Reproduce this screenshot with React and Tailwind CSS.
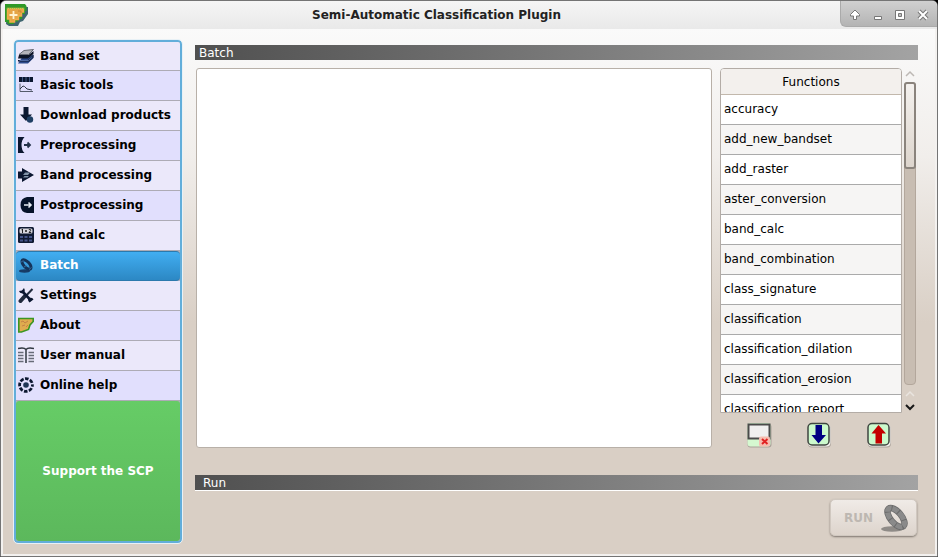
import React from "react";

const ink = "#0b1730";

function StackIcon() {
  return (
    <>
      <path d="M0 15.500h10l5.500-5.500V7L5 8z" fill="#2d4a8c" />
      <path d="M0 12h10l5.500-5.500v3L11 13.500H0z" fill="#0b1730" />
      <path d="M1 7l-1 3.500h10L15.500 6V3l-5 4z" fill="#0d1526" />
      <path d="M1.500 12.500h9l4-3.500" fill="none" stroke="#5f7fc0" strokeWidth=".8" />
      <path d="M1 6.500h9.500l5-5L6 2.500z" fill="#b4b5bb" stroke="#4b5059" strokeWidth=".8" />
    </>
  );
}
function ChartIcon() {
  return (
    <>
      <path d="M1 0h14v5H1z" fill="#0b1730" />
      <path d="M4.500 0v5M8 0v5M11.500 0v5" stroke="#5a75a8" strokeWidth=".7" />
      <path d="M2 6.500v8h13" fill="none" stroke="#555c6c" />
      <path d="M2 12l3-3 1.500.5 2.500 2.500 5 1" fill="none" stroke="#303848" />
    </>
  );
}
function DownloadIcon() {
  return (
    <>
      <path d="M5.500 0h5v7.500h3.500L8 14 2 7.500h3.500z" fill={ink} />
      <circle cx="12" cy="12.500" r="3.200" fill="#1f3f63" />
    </>
  );
}
function PreIcon() {
  return (
    <>
      <path d="M0 0h6.500Q3.500 3 3.500 8t3 8H0z" fill={ink} />
      <path d="M6 8h6M9.500 5.500L12 8l-2.500 2.500" fill="none" stroke="#23324a" strokeWidth="1.800" />
    </>
  );
}
function BandIcon() {
  return (
    <>
      <path d="M0 4.500h4V1l12 7-12 7v-3.500H0z" fill={ink} />
      <path d="M5 8l2-2.500h5L10 8zM5 10.500L6.500 9H11l-1.500 1.500z" fill="#8194a8" />
    </>
  );
}
function PostIcon() {
  return (
    <>
      <path d="M16 0v16H9Q2.500 15 2.500 8T9 0z" fill="#06122a" />
      <path d="M6 8h7M10.500 5.500L13 8l-2.500 2.500" fill="none" stroke="#e8edf5" strokeWidth="1.600" />
    </>
  );
}
function CalcIcon() {
  return (
    <>
      <rect width="16" height="16" rx="1.500" fill="#111b33" />
      <rect x="1.500" y="1.500" width="13" height="5" rx="1.500" fill="#d9d8df" />
      <path d="M4.500 2v4M3.500 2.800h1M7 4h2M8 3v2M10.800 2.600h1.800v1l-1.600 1.900h2.200" fill="none" stroke="#111" strokeWidth=".9" />
      <path d="M2 9h3v2H2zM6.500 9h3v2h-3zM11 9h3v2h-3zM2 12.500h3v2H2zM6.500 12.500h3v2h-3zM11 12.500h3v2h-3z" fill="#46558a" />
    </>
  );
}
function BatchIcon() {
  return (
    <>
      <ellipse cx="6.500" cy="14" rx="5.500" ry="1.700" fill="#173b66" />
      <ellipse cx="8.500" cy="7.500" rx="2.800" ry="6" transform="rotate(-43 8.500 7.500)" fill="none" stroke="#14335a" strokeWidth="3" />
      <path d="M2.500 5.500l3-2M6 10l2.500-1.500M11 12.500l2.500-2" stroke="#3d77ab" strokeWidth=".8" />
    </>
  );
}
function ToolsIcon() {
  return (
    <>
      <path d="M2.500 14.500L14.500 2" stroke="#202a3d" strokeWidth="2" />
      <path d="M2.500 14l4-4.500" stroke="#202a3d" strokeWidth="4" strokeLinecap="round" />
      <path d="M4 4l9 9.500" stroke={ink} strokeWidth="2.600" />
      <path d="M1 4q1 3 4 2t1-5L4 3.500zM15.500 12.500q-1-2.500-4-1.500t0 4.500l2-1.500z" fill={ink} />
    </>
  );
}
function MapIcon() {
  return (
    <>
      <path d="M.8 1.500h14.400v3L12 8l-1.500 4.500-7 2.500H.8z" fill="#dfac4e" stroke="#3b9622" strokeWidth="1.600" />
      <path d="M3 5l2-1 2 2 3-2M4 9l3-1M8 10l2-2" fill="none" stroke="#c58146" />
    </>
  );
}
function BookIcon() {
  return (
    <>
      <path d="M0 1.500q6-1.500 8 1 2-2.500 8-1M8 2.500V16" fill="none" stroke="#303740" strokeWidth="1.500" />
      <path d="M0 5.500h5.500M0 8.500h5.500M0 11.500h5.500M0 14.500h5.500M10.500 5.500H16M10.500 8.500H16M10.500 11.500H16M10.500 14.500H16" stroke="#686c78" strokeWidth="1.300" />
    </>
  );
}
function HelpIcon() {
  return (
    <>
      <circle cx="8" cy="8" r="6.400" fill="none" stroke={ink} strokeWidth="2.800" strokeDasharray="3.600 1.430" strokeDashoffset="1.800" />
      <circle cx="8" cy="8" r="2.800" fill="#1e3555" />
    </>
  );
}

const tabs = [
  ["Band set", StackIcon],
  ["Basic tools", ChartIcon],
  ["Download products", DownloadIcon],
  ["Preprocessing", PreIcon],
  ["Band processing", BandIcon],
  ["Postprocessing", PostIcon],
  ["Band calc", CalcIcon],
  ["Batch", BatchIcon],
  ["Settings", ToolsIcon],
  ["About", MapIcon],
  ["User manual", BookIcon],
  ["Online help", HelpIcon],
];

const functions = [
  "accuracy",
  "add_new_bandset",
  "add_raster",
  "aster_conversion",
  "band_calc",
  "band_combination",
  "class_signature",
  "classification",
  "classification_dilation",
  "classification_erosion",
  "classification_report",
];

function TitleBar() {
  return (
    <header className="flex h-7 shrink-0 items-start bg-linear-to-b from-[#f5f5f5] to-[#e9e9e9]">
      <div className="w-8 shrink-0 pt-[3px] pl-1">
        <svg className="block h-[22px] w-[23px]" viewBox="0 0 23 22" aria-hidden="true">
          <path d="M2 3h21v7l-5 7-3 1-2 4H4l-3-2z" fill="#3f6670" />
          <path d="M0 0h20l1.500 2v5H20v3h-3v5h-4v2.500H9V20H3l-1-2H0z" fill="#2f9a27" />
          <path d="M2.500 4.500h16V8h-2v4h-3v3.500h-4V18H5v-3H2.500z" fill="#e5a546" stroke="#f0ad49" strokeWidth="1.500" />
          <path d="M2 4.500h18" stroke="#8ccf4a" strokeDasharray="1 1" />
          <path d="M8.500 7v8M4.500 11h8" stroke="#fff3cf" strokeWidth="1.800" />
          <path d="M13 7h3v2" fill="none" stroke="#c98330" />
        </svg>
      </div>
      <h1 className="flex-1 text-center text-[12px] leading-7 font-bold text-[#222]">Semi-Automatic Classification Plugin</h1>
      <div className="flex h-[26px] w-[97px] shrink-0 items-center justify-between rounded-bl-md border-b border-l border-[#aaa] bg-linear-to-b from-[#d0d0d0] to-[#b4b4b4] pt-0.5 pr-2 pl-2">
        <button aria-label="Shade">
          <svg className="block size-3" viewBox="0 0 12 12">
            <path d="M6 1l4.500 4.500v1.500H7.500v3.500h-3V7h-3V5.500z" fill="#fff" stroke="#777" />
          </svg>
        </button>
        <button aria-label="Minimize">
          <svg className="block size-3" viewBox="0 0 12 12">
            <path d="M2.500 7.500h7v3h-7z" fill="#fff" stroke="#777" />
          </svg>
        </button>
        <button aria-label="Maximize">
          <svg className="block size-3" viewBox="0 0 12 12">
            <path d="M1.500 1.500h9v9h-9zM4.500 4.500h3v3h-3z" fill="#fff" fillRule="evenodd" stroke="#777" />
          </svg>
        </button>
        <button aria-label="Close">
          <svg className="block size-3" viewBox="0 0 12 12">
            <path d="M2 2l8 8M10 2l-8 8" stroke="#777" strokeWidth="4" />
            <path d="M2 2l8 8M10 2l-8 8" stroke="#fff" strokeWidth="2" />
          </svg>
        </button>
      </div>
    </header>
  );
}

function Sidebar() {
  return (
    <nav className="flex w-[168px] shrink-0 flex-col overflow-hidden rounded-sm border-2 border-[#62aeda] bg-[#b4b2bd] outline outline-[#e8f1f6]">
      {tabs.map(([name, Icon]) => (
        <button
          key={name}
          className={
            name === "Batch"
              ? "flex h-[30px] shrink-0 items-center gap-1.5 rounded-sm border-y border-[#2b79ad] bg-linear-to-b from-[#41aef2] to-[#2c88c4] pb-0.5 pl-0.5 font-bold text-white"
              : "flex h-[30px] shrink-0 items-center gap-1.5 border-b border-[#adabb5] pb-px pl-0.5 font-bold first:h-[29px] odd:bg-[#ebe8fa] even:bg-[#e1dffd]"
          }
        >
          <svg className="size-4 shrink-0" viewBox="0 0 16 16" aria-hidden="true">
            <Icon />
          </svg>
          {name}
        </button>
      ))}
      <button className="flex-1 rounded-[3px] bg-linear-to-b from-[#66cc66] to-[#5cb85c] font-bold text-white">
        Support the SCP
      </button>
    </nav>
  );
}

function FunctionList() {
  return (
    <div className="flex min-h-0 flex-1 gap-px">
      <div className="h-full w-[182px] overflow-hidden rounded-t-sm border border-[#b3aca6] bg-white">
        <table className="w-full border-separate border-spacing-0">
          <thead>
            <tr>
              <th className="h-[26px] border-b border-[#c2b8ac] bg-[#f3f0ed] p-0 font-normal">Functions</th>
            </tr>
          </thead>
          <tbody>
            {functions.map((name) => (
              <tr key={name} className="odd:bg-white even:bg-[#f6f5f4]">
                <td className="h-[30px] border-b border-[#aaa] pt-0 pr-0 pb-0.5 pl-[3px]">{name}</td>
              </tr>
            ))}
          </tbody>
        </table>
      </div>
      <div className="flex w-[14px] flex-col items-center" aria-hidden="true">
        <svg className="h-3.5 w-3 shrink-0" viewBox="0 0 12 14">
          <path d="M2 8l4-4 4 4" fill="none" stroke="#bdb8b4" strokeWidth="1.500" />
        </svg>
        <div className="w-3 flex-1 rounded-sm border border-[#b3a79c] bg-[#c8bdb2]">
          <div className="-mx-px -mt-px h-[87px] rounded-[3px] border-2 border-[#8a837c] bg-linear-to-b from-[#f4f1ee] to-[#ddd5cd]" />
        </div>
        <svg className="h-7 w-3 shrink-0" viewBox="0 0 12 28">
          <path d="M2 11l4-4 4 4" fill="none" stroke="#e9e4df" strokeWidth="1.500" />
          <path d="M2 20l4 4 4-4" fill="none" stroke="#181818" strokeWidth="2" />
        </svg>
      </div>
    </div>
  );
}

function ListActions() {
  return (
    <div className="flex justify-center gap-[34px] pt-[9px]">
      <button aria-label="Clear batch">
        <svg className="block size-[26px]" viewBox="0 0 26 26">
          <rect x="1.500" y="2" width="24" height="23.500" rx="3" fill="#aaa29a" />
          <rect x="1.500" y="1" width="23" height="23.500" rx="3" fill="#d5f8d0" />
          <path d="M2.500 2.500h21v14h-21z" fill="#f0efef" stroke="#4a4a4a" strokeWidth="2" />
          <rect x="13" y="14.500" width="11" height="10" rx="2" fill="#f6bdb0" />
          <path d="M16 17l5.500 5M21.500 17L16 22" stroke="#e02222" strokeWidth="2" />
        </svg>
      </button>
      <button aria-label="Import batch">
        <svg className="block size-[26px]" viewBox="0 0 26 26">
          <rect x="2" y="3" width="23" height="22.500" rx="4" fill="#aaa29a" />
          <rect x="2" y="2" width="22.500" height="22.500" rx="4" fill="#f4f2ef" />
          <rect x="2" y="1.500" width="21" height="21.500" rx="4" fill="#ccfacd" stroke="#3f4640" strokeWidth="1.500" />
          <path d="M9.500 3h6.500v10h4L12.500 21.500 5.500 13h4z" fill="#000082" />
        </svg>
      </button>
      <button aria-label="Export batch">
        <svg className="block size-[26px]" viewBox="0 0 26 26">
          <rect x="2" y="3" width="23" height="22.500" rx="4" fill="#aaa29a" />
          <rect x="2" y="2" width="22.500" height="22.500" rx="4" fill="#f4f2ef" />
          <rect x="2" y="1.500" width="21" height="21.500" rx="4" fill="#ccfacd" stroke="#3f4640" strokeWidth="1.500" />
          <path d="M9.500 21.500h6.500V11.500h4L12.500 3 5.500 11.500h4z" fill="#c40000" />
        </svg>
      </button>
    </div>
  );
}

export default function App() {
  return (
    <div className="bg-black font-['DejaVu_Sans',sans-serif] text-[12px] leading-4 text-black">
      <div className="flex h-screen flex-col overflow-hidden rounded-t-md border border-[#747474] bg-linear-to-b from-[#fafafa] from-5% via-[#f1eeeb] via-28% to-[#d9cfc5] to-58%">
        <TitleBar />
        <div className="flex min-h-0 flex-1 gap-[13px] border-x-2 border-b-2 border-[#f3f1ef] pt-[11px] pr-[17px] pb-[11px] pl-[11px]">
          <Sidebar />
          <main className="flex min-w-0 flex-1 flex-col pt-[5px] pb-1.5">
            <h2 className="h-[15px] shrink-0 bg-linear-to-r from-[#505050] to-[#a3a3a3] pl-1 leading-4 text-white">Batch</h2>
            <div className="mx-px mt-2 mb-[27px] flex min-h-0 flex-1 gap-2">
              <textarea aria-label="Batch commands" className="min-w-0 flex-1 resize-none rounded-[3px] border border-[#b8b0a8] bg-white p-1 outline-none" />
              <section className="flex w-[197px] shrink-0 flex-col">
                <FunctionList />
                <ListActions />
              </section>
            </div>
            <h2 className="h-4 shrink-0 border-b border-white bg-linear-to-r from-[#505050] to-[#a3a3a3] pl-2 leading-4 text-white">Run</h2>
            <button
              disabled
              className="mt-2 mr-px flex h-[37px] w-[87px] shrink-0 items-center justify-between self-end rounded-[5px] border border-[#d0c8c0] bg-linear-to-b from-[#f0ebe7] to-[#ddd4cc] pr-1.5 pl-[13px] font-bold text-[#bdb7b1] shadow-[0_1px_2px_#7d756e]"
            >
              RUN
              <svg className="h-7 w-[30px]" viewBox="0 0 30 28" aria-hidden="true">
                <ellipse cx="12" cy="25" rx="11" ry="2.800" fill="#8f8b87" />
                <ellipse cx="16" cy="13.500" rx="5.500" ry="11.500" transform="rotate(-40 16 13.500)" fill="none" stroke="#6c6c6c" strokeWidth="6.500" />
                <ellipse cx="16" cy="13.500" rx="5.500" ry="11.500" transform="rotate(-40 16 13.500)" fill="none" stroke="#8a8a8a" strokeWidth="5" strokeDasharray="6.500 1" />
              </svg>
            </button>
            <div className="h-px shrink-0" />
          </main>
        </div>
      </div>
    </div>
  );
}
